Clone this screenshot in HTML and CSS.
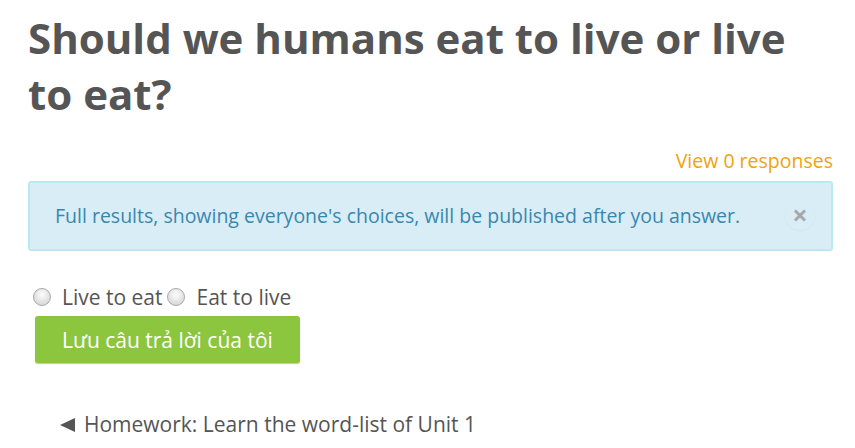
FILE: index.html
```html
<!DOCTYPE html>
<html>
<head>
<meta charset="utf-8">
<link rel="stylesheet" href="styles.css">
</head>
<body>
<div class="page">
  <h1 class="title">Should we humans eat to live or live to eat?</h1>
  <div class="responses"><a class="resp-link" href="#">View 0 responses</a></div>
  <div class="alert">
    <span class="alert-text">Full results, showing everyone's choices, will be published after you answer.</span>
    <span class="close">×</span>
  </div>
  <form class="poll">
    <div class="options">
      <label class="opt"><span class="radio"></span>Live to eat</label>
      <label class="opt"><span class="radio"></span>Eat to live</label>
    </div>
    <button class="btn" type="button">Lưu câu trả lời của tôi</button>
  </form>
  <div class="nav"><svg class="arrow" width="15" height="14" viewBox="0 0 15 14"><polygon points="0,7 15,0 15,14" fill="#555"/></svg>Homework: Learn the word-list of Unit 1</div>
</div>
</body>
</html>
```
FILE: styles.css
```css
html, body { margin: 0; padding: 0; background: #fff; }
body { font-family: "Open Sans", sans-serif; color: #555; }
.page { padding: 0 22px 0 28px; }
.title { margin: 0; padding-top: 10px; font-size: 42px; line-height: 56px; font-weight: 700; color: #555; }
.responses { text-align: right; margin-top: 26px; font-size: 19.5px; line-height: 26px; }
.resp-link { color: #f0a30a; text-decoration: none; }
.alert { margin-top: 7px; display: flex; align-items: center; justify-content: space-between; background: #d9edf7; border: 2px solid #bce8f1; border-radius: 3px; padding: 17px 26px 19px 25px; color: #3a87ad; font-size: 19.5px; line-height: 27px; }
.close { color: #a5a9ac; font-size: 27px; font-weight: 700; line-height: 30px; width: 30px; height: 30px; border-radius: 50%; text-align: center; box-shadow: 0 1px 2px rgba(0,0,0,.04); margin-right: -10px; }
.poll { margin-top: 31px; }
.options { display: flex; align-items: center; font-size: 21px; line-height: 30px; padding-left: 5px; }
.opt { display: flex; align-items: center; margin-right: 4px; }
.radio { width: 18px; height: 18px; border-radius: 50%; border: 1px solid #a9a9a9; background: radial-gradient(circle at 50% 35%, #fdfdfd, #dcdcdc 70%, #cfcfcf); margin: 0 11px 0 0; box-sizing: border-box; }
.opt + .opt .radio { margin-right: 12px; }
.btn { display: block; margin: 4px 0 0 7px; background: #8cc63f; color: #fff; border: 0; border-radius: 3px; font-family: "Open Sans", sans-serif; font-size: 21px; padding: 0 27px; height: 47px; box-shadow: 0 1px 1px rgba(0,0,0,.25); }
.nav { display: flex; align-items: center; margin: 46px 0 0 32px; font-size: 21px; line-height: 30px; color: #555; }
.arrow { margin: 2px 9px 0 0; }
```
